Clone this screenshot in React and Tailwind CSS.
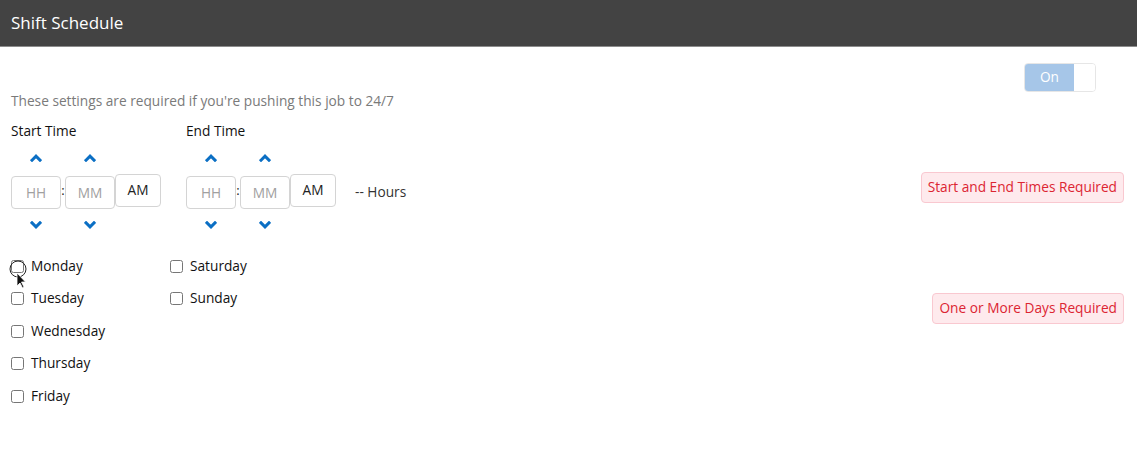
import React from 'react';

const font = { fontFamily: '"Open Sans", "Liberation Sans", sans-serif' };

const ChevronUp = () => (
  <svg width="12" height="8" viewBox="0 0 12 8" className="block">
    <path d="M2 6.2 L6 2.2 L10 6.2" fill="none" stroke="#0b6fc4" strokeWidth="3" strokeLinecap="square" />
  </svg>
);

const ChevronDown = () => (
  <svg width="12" height="8" viewBox="0 0 12 8" className="block">
    <path d="M2 1.8 L6 5.8 L10 1.8" fill="none" stroke="#0b6fc4" strokeWidth="3" strokeLinecap="square" />
  </svg>
);

// one spinner column: up arrow, box, down arrow
const Spinner = ({ placeholder }) => (
  <div className="flex flex-col items-center">
    <div className="h-[36px] flex items-center justify-center">
      <ChevronUp />
    </div>
    <input
      placeholder={placeholder}
      className="w-[50px] h-[33px] border border-[#d4d4d4] rounded-[4px] text-center text-[13.7px] text-[#222] placeholder:text-[#a0a0a0] outline-none"
      style={font}
    />
    <div className="h-[32px] flex items-center justify-center">
      <ChevronDown />
    </div>
  </div>
);

const TimePicker = ({ label }) => (
  <div className="flex flex-col">
    <div className="text-[13.7px] leading-[18px] text-[#111]">{label}</div>
    <div className="flex items-center">
      <Spinner placeholder="HH" />
      <span className="w-[4px] text-[13px] text-[#222] text-center leading-none">:</span>
      <Spinner placeholder="MM" />
      <button className="w-[46px] h-[33px] border border-[#d4d4d4] rounded-[4px] text-[13.7px] text-[#222] bg-white">
        AM
      </button>
    </div>
  </div>
);

const Day = ({ name }) => (
  <label className="flex items-center h-[32.5px] text-[13.7px] text-[#111]">
    <input type="checkbox" className="w-[13px] h-[13px] m-0 accent-[#0b6fc4]" />
    <span className="ml-[7px]">{name}</span>
  </label>
);

const Alert = ({ children, className = '' }) => (
  <div className={`px-[6px] h-[31px] flex items-center rounded-[4px] border border-[#f9c8d0] bg-[#feeaed] text-[13.7px] text-[#dc2532] ${className}`}>
    {children}
  </div>
);

export default function App() {
  return (
    <div className="w-[1137px] h-[459px] bg-white relative overflow-hidden" style={font}>
      <div className="h-[47px] bg-[#434343] border-b border-[#8c8c8c] flex items-center px-[11px]">
        <h1 className="text-[17px] text-white font-normal">Shift Schedule</h1>
      </div>

      <div className="pl-[11px] pr-[13px]">
        <div className="flex justify-end pt-[16px] pr-[28px]">
          <div className="flex w-[72px] h-[29px] border border-[#e6e6e6] rounded-[4px] overflow-hidden">
            <div className="w-[49px] bg-[#a6c6e8] text-white text-[13.7px] flex items-center justify-center">On</div>
            <div className="flex-1 bg-white"></div>
          </div>
        </div>

        <p className="text-[13.7px] leading-[18px] text-[#7a7a7a]">
          These settings are required if you're pushing this job to 24/7
        </p>

        <div className="flex justify-between items-start mt-[12px]">
          <div className="flex items-start">
            <TimePicker label="Start Time" />
            <div className="ml-[25px]">
              <TimePicker label="End Time" />
            </div>
            <div className="ml-[19px] mt-[54px] h-[33px] flex items-center text-[13.7px] text-[#333]">-- Hours</div>
          </div>
          <Alert className="mt-[50px]">Start and End Times Required</Alert>
        </div>

        <div className="flex justify-between items-start mt-[9px]">
          <div className="flex">
            <div className="w-[159px] flex flex-col">
              <Day name="Monday" />
              <Day name="Tuesday" />
              <Day name="Wednesday" />
              <Day name="Thursday" />
              <Day name="Friday" />
            </div>
            <div className="flex flex-col">
              <Day name="Saturday" />
              <Day name="Sunday" />
            </div>
          </div>
          <Alert className="mt-[43px]">One or More Days Required</Alert>
        </div>
      </div>

      {/* mouse pointer captured in the screenshot */}
      <svg className="absolute left-[8px] top-[260px]" width="22" height="28" viewBox="0 0 22 28">
        <circle cx="10" cy="9" r="8" fill="none" stroke="#222" strokeWidth="1" />
        <path d="M9 13 L9 26 L12 23 L14.5 28 L16 27 L13.5 22 L17.5 22 Z" fill="#111" stroke="#fff" strokeWidth="0.8" />
      </svg>
    </div>
  );
}
